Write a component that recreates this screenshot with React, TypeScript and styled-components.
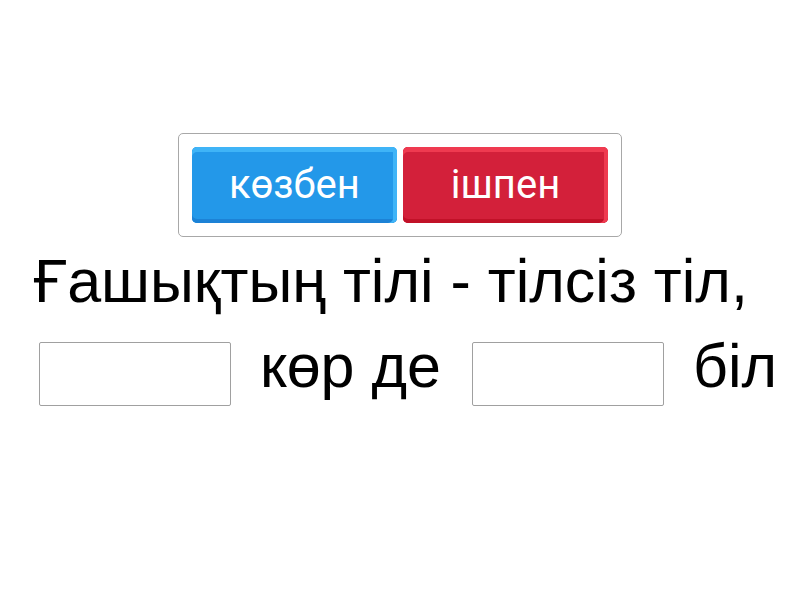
import React from "react";
import styled, { createGlobalStyle } from "styled-components";

const Global = createGlobalStyle`
  html, body { margin: 0; padding: 0; background: #fff; }
  body { font-family: "Liberation Sans", Arial, sans-serif; }
`;

const Page = styled.div`
  width: 800px;
  height: 600px;
  display: flex;
  flex-direction: column;
  align-items: center;
  padding-top: 133px;
  box-sizing: border-box;
`;

const Tray = styled.div`
  display: flex;
  gap: 6px;
  padding: 13px;
  border: 1px solid #a8a8a8;
  border-radius: 5px;
`;

const Tile = styled.div<{ $face: string; $light: string; $dark: string }>`
  width: 205px;
  height: 76px;
  box-sizing: border-box;
  border-radius: 5px;
  background: ${(p) => p.$face};
  box-shadow: inset 0 5px 0 ${(p) => p.$light}, inset -4px 0 0 ${(p) => p.$light},
    inset 0 -4px 0 ${(p) => p.$dark}, inset 4px 0 0 ${(p) => p.$face};
  display: flex;
  align-items: center;
  justify-content: center;
  padding-bottom: 2px;
  color: #fff;
  font-family: Roboto, "Noto Sans", sans-serif;
  font-size: 40px;
`;

const Sentence = styled.div`
  margin-top: 2px;
  display: flex;
  flex-direction: column;
  align-items: center;
  font-family: "Liberation Sans", Arial, sans-serif;
  font-size: 61px;
  color: #000;
`;

const Line = styled.div<{ $shift?: number }>`
  display: flex;
  align-items: flex-start;
  gap: 29px;
  height: 85px;
  line-height: 85px;
  white-space: nowrap;
  transform: translateX(${(p) => p.$shift ?? 0}px);
`;

const Word = styled.span<{ $after?: number }>`
  margin-right: ${(p) => p.$after ?? 0}px;
`;

const Blank = styled.div`
  width: 192px;
  height: 64px;
  box-sizing: border-box;
  border: 1px solid #a0a0a0;
  border-radius: 2px;
  background: #fff;
  margin-top: 18px;
`;

export default function App() {
  return (
    <>
      <Global />
      <Page>
        <Tray>
          <Tile $face="#2398e9" $light="#3fb4f7" $dark="#1c82d6">көзбен</Tile>
          <Tile $face="#d3203a" $light="#ef3a50" $dark="#c11128">ішпен</Tile>
        </Tray>
        <Sentence>
          <Line $shift={-9}>Ғашықтың тілі - тілсіз тіл,</Line>
          <Line $shift={8}>
            <Blank />
            <Word $after={2}>көр де</Word>
            <Blank />
            <Word>біл</Word>
          </Line>
        </Sentence>
      </Page>
    </>
  );
}
